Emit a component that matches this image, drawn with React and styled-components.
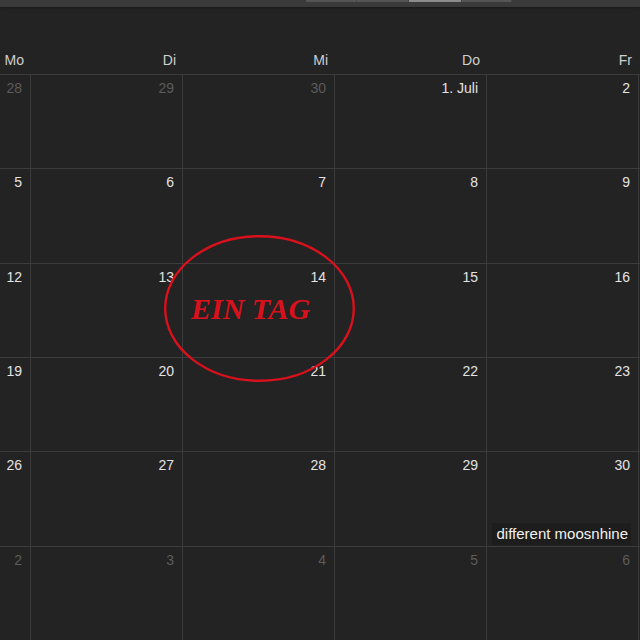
import React from 'react'
import styled, { createGlobalStyle } from 'styled-components'

const GlobalStyle = createGlobalStyle`
  html, body {
    margin: 0;
    padding: 0;
    background: #232323;
  }
  body {
    font-family: "Liberation Sans", Arial, sans-serif;
    overflow: hidden;
  }
`

const COLS = '152px 152px 152px 152px 152px 152px'

const Page = styled.div`
  width: 640px;
  height: 640px;
  overflow: hidden;
  background: #232323;
  display: flex;
  flex-direction: column;
`

const TopBar = styled.div`
  height: 7px;
  flex: none;
  background: #3a3a3a;
  display: flex;
  justify-content: center;
  padding-left: 178px;
  box-shadow: 0 1px 2px rgba(0, 0, 0, 0.35);
`

const Segments = styled.div`
  display: flex;
  height: 2px;
`

const Segment = styled.div`
  width: ${p => p.w}px;
  background: ${p => (p.active ? '#8c8c8c' : '#555555')};
  border-right: 1px solid #444;
`

const Header = styled.div`
  flex: none;
  height: 67px;
  display: grid;
  grid-template-columns: ${COLS};
  margin-left: -121px;
  align-items: end;
`

const DayName = styled.div`
  text-align: right;
  padding: 0 7px 6px 0;
  font-size: 14px;
  color: #cfcfcf;
`

const GridWrap = styled.div`
  position: relative;
  flex: 1;
`

const Grid = styled.div`
  height: 100%;
  display: grid;
  grid-template-columns: ${COLS};
  grid-template-rows: repeat(6, 1fr);
  margin-left: -121px;
`

const Cell = styled.div`
  border-top: 1px solid #3c3c3c;
  border-right: 1px solid #3c3c3c;
  display: flex;
  flex-direction: column;
  align-items: flex-end;
  justify-content: space-between;
  padding: 5px 0 0 0;
  box-sizing: border-box;
  min-height: 0;
`

const DayNum = styled.div`
  padding-right: 8px;
  font-size: 14px;
  line-height: 16px;
  color: ${p => (p.dim ? '#5c5c5c' : '#e4e4e4')};
`

const Event = styled.div`
  margin-right: 7px;
  margin-bottom: 1px;
  padding: 2px 3px 3px 5px;
  background: #1d1d1d;
  color: #f2f2f2;
  font-size: 15px;
  line-height: 17px;
  white-space: nowrap;
`

const Annotation = styled.div`
  position: absolute;
  left: 164px;
  top: 161px;
  width: 191px;
  height: 147px;
  pointer-events: none;
`

const Ring = styled.svg`
  position: absolute;
  inset: 0;
  overflow: visible;
`

const AnnotationLabel = styled.div`
  position: absolute;
  left: 27px;
  top: 59px;
  font-family: "Liberation Serif", "Times New Roman", serif;
  font-style: italic;
  font-weight: bold;
  font-size: 30px;
  line-height: 30px;
  color: #d8111c;
  white-space: nowrap;
`

const weekdays = ['Mo', 'Di', 'Mi', 'Do', 'Fr', '']

const weeks = [
  [['28', true], ['29', true], ['30', true], ['1. Juli'], ['2'], ['']],
  [['5'], ['6'], ['7'], ['8'], ['9'], ['']],
  [['12'], ['13'], ['14'], ['15'], ['16'], ['']],
  [['19'], ['20'], ['21'], ['22'], ['23'], ['']],
  [['26'], ['27'], ['28'], ['29'], ['30', false, 'different moosnhine'], ['']],
  [['2', true], ['3', true], ['4', true], ['5', true], ['6', true], ['']],
]

export default function App() {
  return (
    <Page>
      <GlobalStyle />
      <TopBar>
        <Segments>
          <Segment w={50} />
          <Segment w={51} />
          <Segment w={52} active />
          <Segment w={49} />
        </Segments>
      </TopBar>
      <Header>
        {weekdays.map((d, i) => (
          <DayName key={i}>{d}</DayName>
        ))}
      </Header>
      <GridWrap>
        <Grid>
          {weeks.map((week, wi) =>
            week.map(([label, dim, event], di) => (
              <Cell key={`${wi}-${di}`}>
                <DayNum dim={dim}>{label}</DayNum>
                {event && <Event>{event}</Event>}
              </Cell>
            ))
          )}
        </Grid>
        <Annotation>
          <Ring viewBox="0 0 191 147">
            <ellipse cx="95.5" cy="73.5" rx="94.3" ry="72.3" fill="none" stroke="#d8111c" strokeWidth="2.4" />
          </Ring>
          <AnnotationLabel>EIN TAG</AnnotationLabel>
        </Annotation>
      </GridWrap>
    </Page>
  )
}
